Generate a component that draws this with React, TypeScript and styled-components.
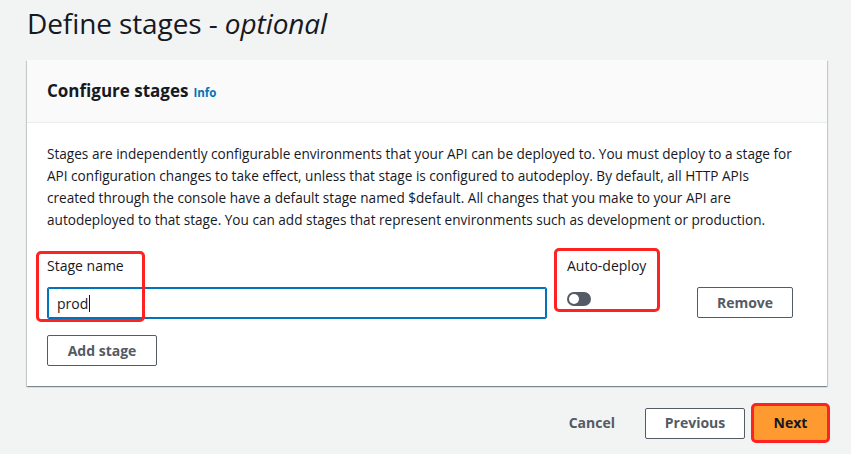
import React from "react";
import styled, { createGlobalStyle } from "styled-components";

const Global = createGlobalStyle`
  html, body { margin: 0; padding: 0; background: #f2f3f3; }
  body { font-family: "Open Sans", "Noto Sans", sans-serif; color: #16191f; }
  * { box-sizing: border-box; }
`;

const Page = styled.div`
  width: 851px;
  height: 454px;
  overflow: hidden;
  padding: 0 21px 0 27px;
  background: #f2f3f3;
`;

const Title = styled.h1`
  margin: 0;
  font-size: 28px;
  line-height: 46px;
  font-weight: 400;
  letter-spacing: -0.1px;
  color: #16191f;
  em { font-style: italic; }
`;

const Card = styled.section`
  margin-top: 14px;
  width: 800px;
  background: #fff;
  box-shadow: 0 1px 1px 0 rgba(0, 28, 36, 0.3), 1px 1px 1px 0 rgba(0, 28, 36, 0.15),
    -1px 1px 1px 0 rgba(0, 28, 36, 0.15);
`;

const CardHeader = styled.header`
  background: #fafafa;
  border-bottom: 1px solid #eaeded;
  padding: 20px;
  display: flex;
  align-items: baseline;
  gap: 5px;
`;

const CardTitle = styled.h2`
  margin: 0;
  font-size: 17px;
  line-height: 22px;
  font-weight: 700;
`;

const InfoLink = styled.a`
  font-size: 11.5px;
  font-weight: 700;
  color: #0073bb;
  text-decoration: none;
`;

const CardBody = styled.div`
  padding: 20px;
`;

const Paragraph = styled.p`
  margin: 0;
  max-width: 751px;
  font-size: 13.6px;
  line-height: 22px;
  color: #16191f;
`;

const StageRow = styled.div`
  margin-top: 24px;
  display: flex;
  align-items: flex-start;
  gap: 20px;
`;

const Field = styled.div<{ $width: number }>`
  position: relative;
  width: ${(p) => p.$width}px;
  display: flex;
  flex-direction: column;
`;

const Label = styled.label`
  font-size: 14px;
  line-height: 22px;
  color: #16191f;
`;

const InputBox = styled.div`
  margin-top: 10px;
  height: 32px;
  border: 1px solid #0073bb;
  box-shadow: 0 0 0 1px #0073bb inset;
  border-radius: 2px;
  padding: 0 9px;
  display: flex;
  align-items: center;
  font-size: 14px;
  color: #16191f;
`;

const Caret = styled.span`
  display: inline-block;
  width: 1px;
  height: 17px;
  background: #16191f;
  margin-left: 1px;
`;

const Toggle = styled.div<{ $on: boolean }>`
  margin-top: 15px;
  width: 24px;
  height: 14px;
  border-radius: 7px;
  background: ${(p) => (p.$on ? "#0073bb" : "#545b64")};
  position: relative;
  &::after {
    content: "";
    position: absolute;
    top: 2px;
    left: ${(p) => (p.$on ? "12px" : "2px")};
    width: 10px;
    height: 10px;
    border-radius: 50%;
    background: #fff;
  }
`;

const Highlight = styled.div<{ $l: number; $t: number; $w: number; $h: number }>`
  position: absolute;
  left: ${(p) => p.$l}px;
  top: ${(p) => p.$t}px;
  width: ${(p) => p.$w}px;
  height: ${(p) => p.$h}px;
  border: 3px solid #ff2222;
  border-radius: 5px;
  pointer-events: none;
`;

const Button = styled.button`
  display: block;
  font-family: inherit;
  font-size: 14px;
  font-weight: 700;
  line-height: 20px;
  white-space: nowrap;
  border-radius: 2px;
  cursor: pointer;
  border: 1px solid #545b64;
  background: #fff;
  color: #545b64;
  padding: 0;
  height: 31px;
`;

const RemoveButton = styled(Button)`
  margin-top: 32px;
  width: 96px;
`;

const AddButton = styled(Button)`
  margin-top: 16px;
  width: 110px;
`;

const Footer = styled.div`
  margin-top: 17px;
  width: 803px;
  display: flex;
  justify-content: flex-end;
  align-items: center;
  gap: 6px;
`;

const LinkButton = styled(Button)`
  border: none;
  background: transparent;
  padding: 0 20px;
  margin-right: 4px;
`;

const PrimaryButton = styled(Button)`
  background: #fe9a2f;
  color: #16191f;
  border: 3px solid #ff2222;
  border-radius: 5px;
  height: 40px;
  width: 79px;
`;

const PrevButton = styled(Button)`
  width: 100px;
`;

export default function App() {
  return (
    <Page>
      <Global />
      <Title>
        Define stages - <em>optional</em>
      </Title>
      <Card>
        <CardHeader>
          <CardTitle>Configure stages</CardTitle>
          <InfoLink href="#">Info</InfoLink>
        </CardHeader>
        <CardBody>
          <Paragraph>
            Stages are independently configurable environments that your API can be deployed to. You must deploy to a
            stage for API configuration changes to take effect, unless that stage is configured to autodeploy. By
            default, all HTTP APIs created through the console have a default stage named $default. All changes that
            you make to your API are autodeployed to that stage. You can add stages that represent environments such as
            development or production.
          </Paragraph>
          <StageRow>
            <Field $width={500}>
              <Label>Stage name</Label>
              <InputBox>
                prod
                <Caret />
              </InputBox>
              <Highlight $l={-11} $t={-4} $w={109} $h={71} />
            </Field>
            <Field $width={110}>
              <Label>Auto-deploy</Label>
              <Toggle $on={false} />
              <Highlight $l={-13} $t={-7} $w={106} $h={64} />
            </Field>
            <RemoveButton>Remove</RemoveButton>
          </StageRow>
          <AddButton>Add stage</AddButton>
        </CardBody>
      </Card>
      <Footer>
        <LinkButton>Cancel</LinkButton>
        <PrevButton>Previous</PrevButton>
        <PrimaryButton>Next</PrimaryButton>
      </Footer>
    </Page>
  );
}
